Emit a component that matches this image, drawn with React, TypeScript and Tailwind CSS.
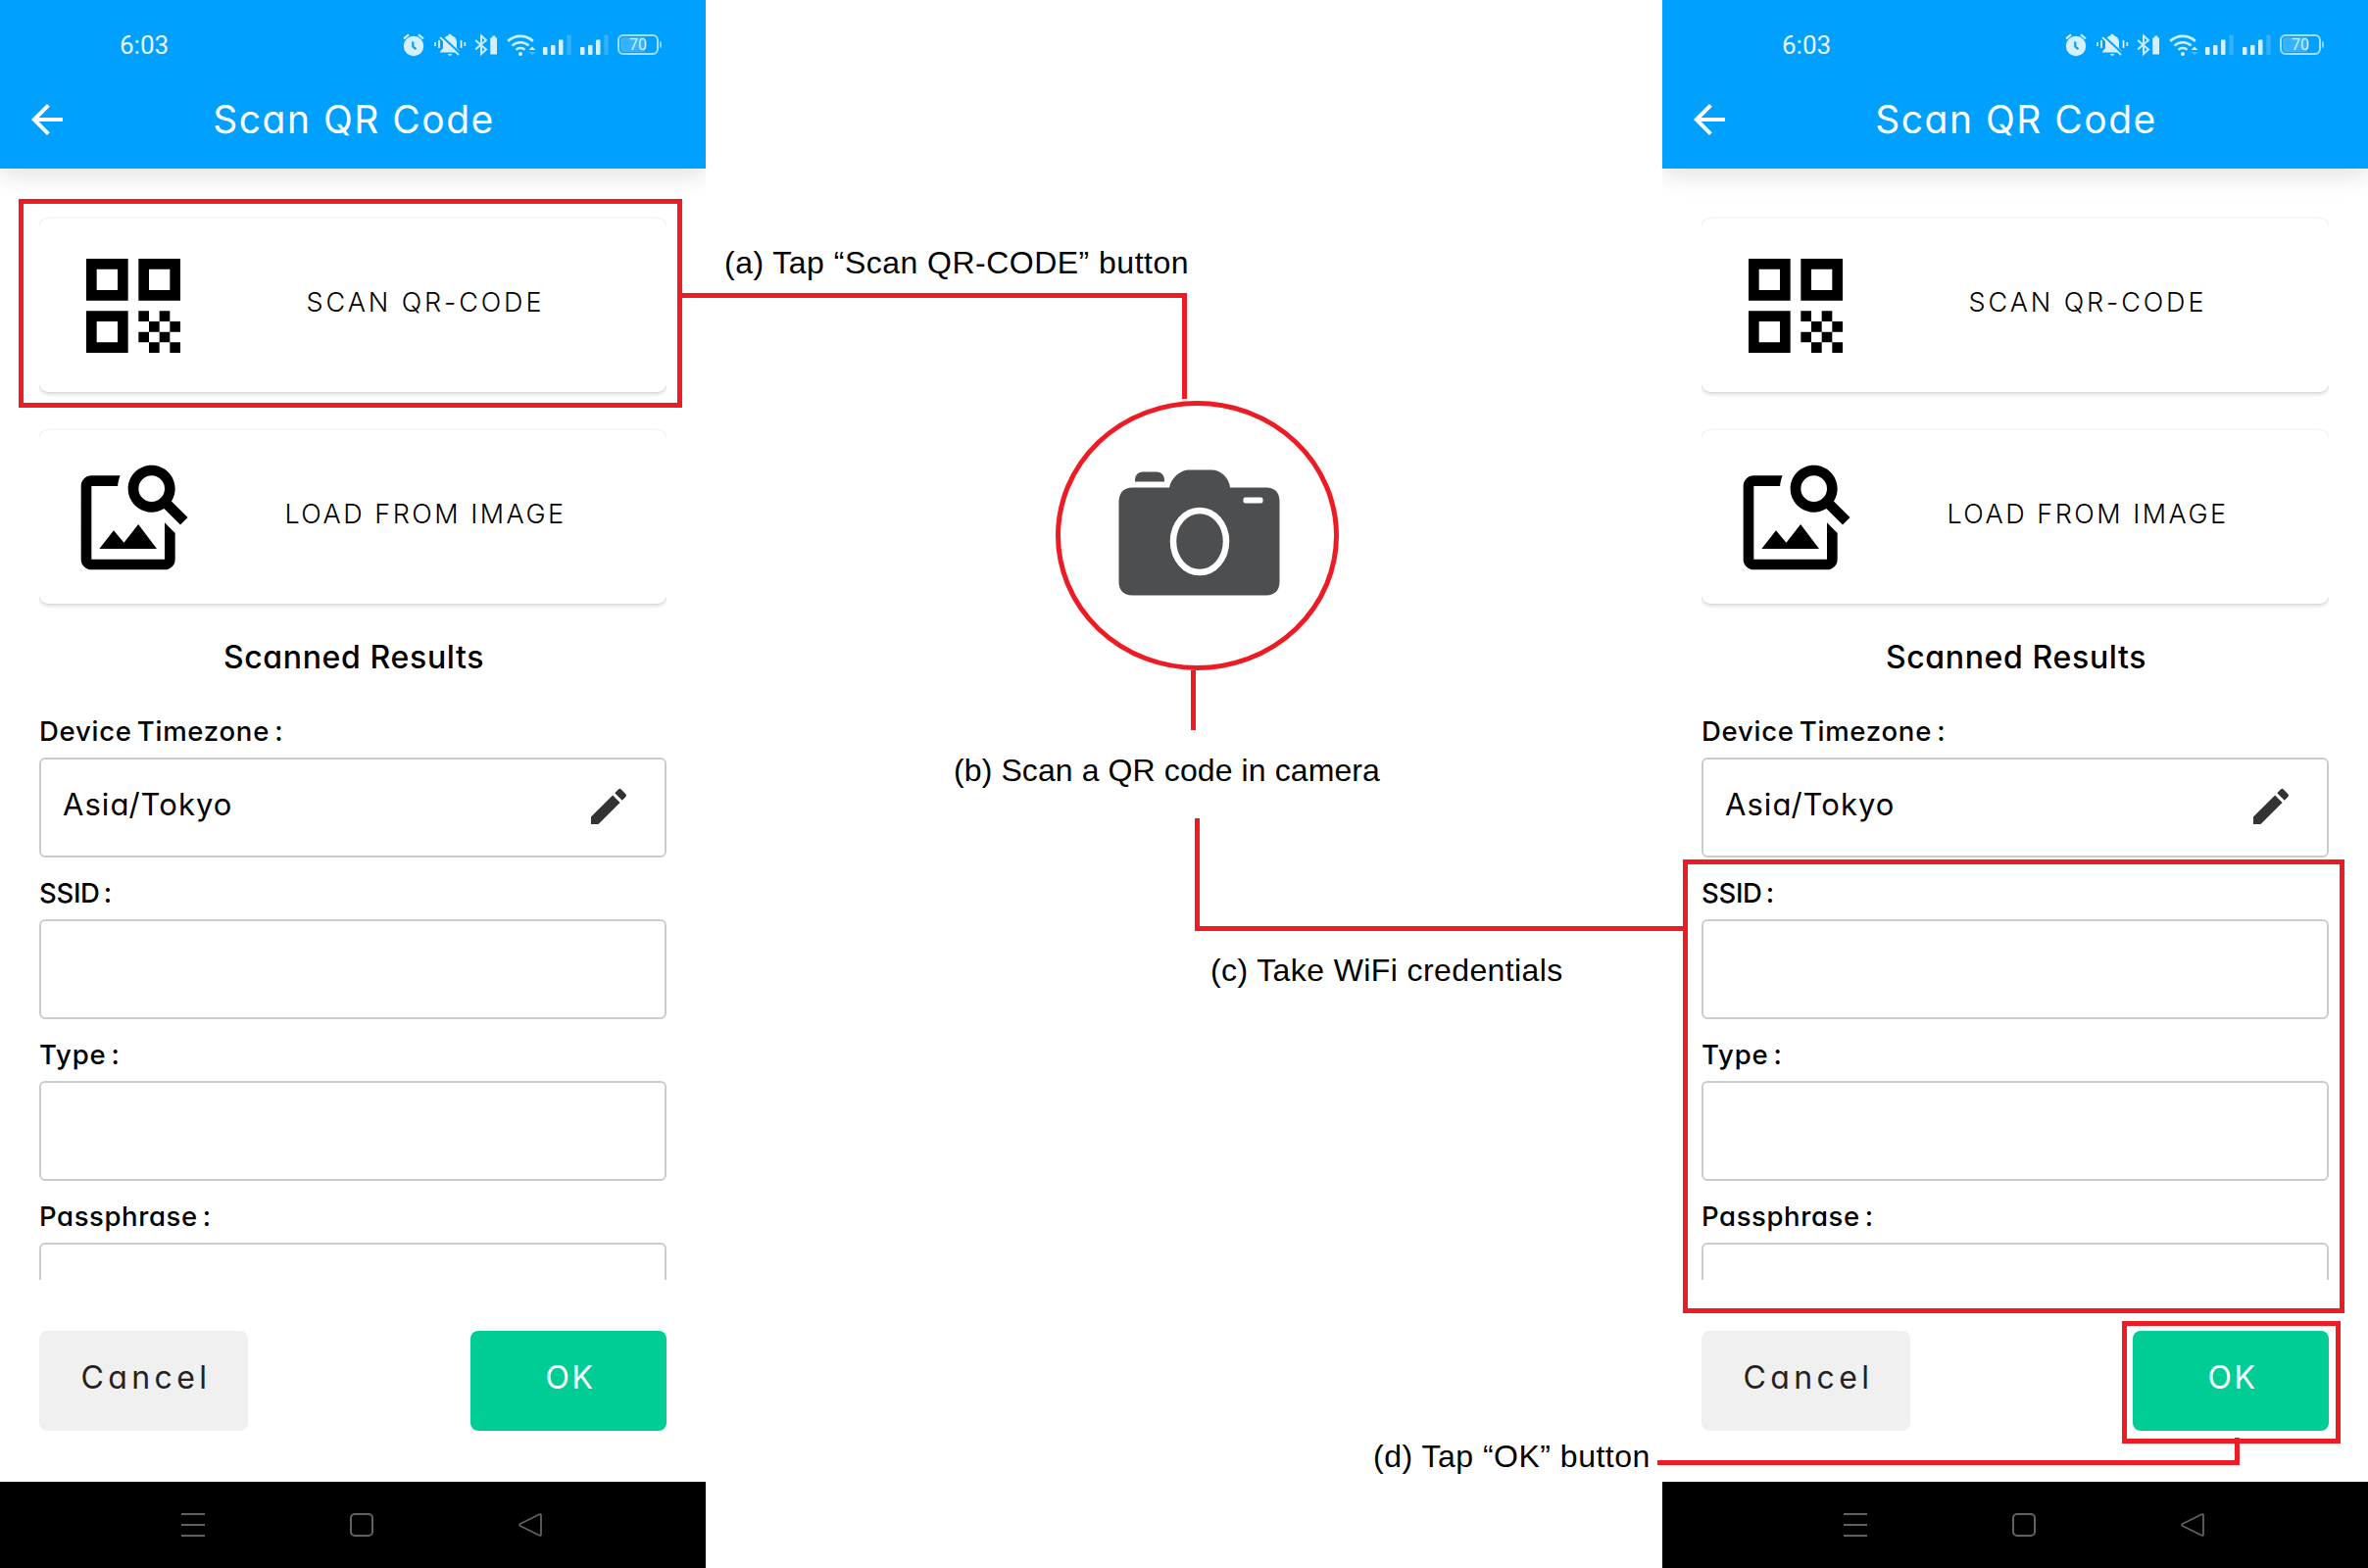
import React from "react";
import { MdArrowBack, MdEdit, MdImageSearch } from "react-icons/md";

function AlarmIcon() {
  return (
    <svg className="mr-[8px] h-[24px] w-[24px]" viewBox="0 0 24 24" fill="none">
      <circle cx="12" cy="13" r="10.2" fill="#d5f1ff" />
      <path d="M2 5.5 7 1.4M22 5.5l-5-4.1" stroke="#d5f1ff" strokeWidth="2.2" />
      <path d="M11.3 8.5v5l3.2 2.6" stroke="#00a0ff" strokeWidth="2.2" />
    </svg>
  );
}

function BellOffIcon() {
  return (
    <svg className="mr-[7px] h-[24px] w-[34px]" viewBox="0 0 34 24" fill="none">
      <path
        d="M17 .8c1 0 1.6.7 1.7 1.6 3.3.7 5.3 3.3 5.3 6.8V15l3 3.4v1H7v-1L10 15V9.200c0-3.500 2-6.100 5.300-6.800.1-.9.7-1.600 1.700-1.600ZM14.800 21h4.400c-.3 1.200-1.100 1.800-2.200 1.800s-1.900-.6-2.200-1.800Z"
        fill="#d5f1ff"
      />
      <path d="M8.500 3 27.500 20.500" stroke="#00a0ff" strokeWidth="2.200" />
      <path d="M7 4.200 26 22" stroke="#d5f1ff" strokeWidth="1.800" />
      <path d="M2 9v4M6 7v8M28.500 7v8M32.300 9v4" stroke="#d5f1ff" strokeWidth="1.800" />
    </svg>
  );
}

function BluetoothIcon() {
  return (
    <svg className="mr-[10px] h-[24px] w-[24px]" viewBox="0 0 24 24" fill="none">
      <path d="m2 7 11 9.500L8 21V2.500l5 4.500L2 16.500" stroke="#c4ecff" strokeWidth="2" />
      <path d="M17.300 4.500h2V2.500h3v2h1.700V21.500h-6.700z" fill="#d5f1ff" />
    </svg>
  );
}

function WifiIcon() {
  return (
    <svg className="mr-[7px] h-[24px] w-[30px]" viewBox="0 0 30 24" fill="none">
      <path d="M1.200 8a18.500 18.500 0 0 1 25.600 0" stroke="#c4f0ff" strokeWidth="2.600" />
      <path d="M5.500 12.600a12.300 12.300 0 0 1 17 0" stroke="#c4f0ff" strokeWidth="2.600" />
      <path d="M9.500 16.800a6.400 6.400 0 0 1 9 0" stroke="#c4f0ff" strokeWidth="2.600" />
      <circle cx="14" cy="21" r="2" fill="#d5f1ff" />
      <path d="m22.500 17 3.500-3.500 3.500 3.500z" fill="#c4f0ff" />
      <path d="m22.500 19 3.500 3.500 3.500-3.500z" fill="#45b9ff" />
    </svg>
  );
}

function SignalIcon() {
  return (
    <svg className="mr-[9px] h-[24px] w-[29px]" viewBox="0 0 29 24">
      <rect x="0" y="14" width="4.500" height="8" rx="1" fill="#d5f1ff" />
      <rect x="8" y="12" width="4.500" height="10" rx="1" fill="#d5f1ff" />
      <rect x="16" y="6.500" width="4.500" height="15.500" rx="1" fill="#d5f1ff" />
      <rect x="24.300" y="1.500" width="4.500" height="20.500" rx="1" fill="#33b0ff" />
    </svg>
  );
}

function Battery() {
  return (
    <div className="flex items-center">
      <div className="flex h-[21px] w-[42px] items-center rounded-[6px] border-2 border-[#9fdfff] p-px">
        <div className="flex h-full w-full items-center justify-center rounded-[4px] bg-[linear-gradient(90deg,#38b2ff_70%,#00a0ff_70%)] font-['Roboto'] text-[16px] leading-none text-[#d5f1ff]">
          70
        </div>
      </div>
      <div className="ml-[1px] h-[7px] w-[2px] rounded-r bg-[#8fd8ff]" />
    </div>
  );
}

function QrIcon() {
  return (
    <svg className="h-[128px] w-[128px]" viewBox="0 0 108 108" fill="#000">
      <path
        fillRule="evenodd"
        d="M13.500 13.500h36v36h-36zM22.500 22.500v18h18v-18zM58.500 13.500h36v36h-36zM67.500 22.500v18h18v-18zM13.500 58.500h36v36h-36zM22.500 67.500v18h18v-18z"
      />
      <path d="M58.500 58.500h9v9h-9zM76.500 58.500h9v9h-9zM67.500 67.500h9v9h-9zM85.500 67.500h9v9h-9zM58.500 76.500h9v9h-9zM76.500 76.500h9v9h-9zM67.500 85.500h9v9h-9zM85.500 85.500h9v9h-9z" />
    </svg>
  );
}

function ActionCard({ icon, children }: { icon: React.ReactNode; children: React.ReactNode }) {
  return (
    <div className="flex h-[177px] shrink-0 items-center rounded-[9px] bg-white pl-8 shadow-[0_2px_4px_rgba(0,0,0,0.16),0_0_2px_rgba(0,0,0,0.1)]">
      {icon}
      <div className="flex-1 pr-[12px] pb-[6px] text-center text-[27px] leading-[34px] font-[360]">{children}</div>
    </div>
  );
}

function Field({ label, children }: { label: React.ReactNode; children?: React.ReactNode }) {
  return (
    <div className="mb-[19px] shrink-0">
      <div className="mb-[10px] h-[34px] text-[27.5px] leading-[34px] font-medium whitespace-nowrap [word-spacing:-3px]">
        {label}
      </div>
      <div className="flex h-[102px] items-center justify-between rounded-[6px] border-2 border-[#cccccc] pr-[33px] pl-[22px]">
        {children}
      </div>
    </div>
  );
}

function Phone() {
  return (
    <div className="flex h-[1600px] w-[720px] shrink-0 flex-col overflow-hidden bg-white font-['Inter',sans-serif] text-black [font-feature-settings:'cv11']">
      <header className="relative z-10 flex h-[172px] shrink-0 flex-col bg-[#00a0ff] shadow-[0_6px_24px_rgba(0,0,0,0.13)]">
        <div className="flex h-[72px] items-center pt-[19px] pr-[45px] pl-[122px]">
          <span className="flex-1 font-['Roboto'] text-[26px] leading-[30px] text-[#e6f6ff]">6:03</span>
          <AlarmIcon />
          <BellOffIcon />
          <BluetoothIcon />
          <WifiIcon />
          <SignalIcon />
          <SignalIcon />
          <Battery />
        </div>
        <div className="flex h-[100px] items-center px-6">
          <MdArrowBack className="h-[48px] w-[48px] text-white" />
          <h1 className="flex-1 pr-[46px] text-center text-[39px] leading-[50px] tracking-[1.5px] text-white">
            Scan QR Code
          </h1>
        </div>
      </header>

      <main className="mx-10 flex h-[1134px] shrink-0 flex-col overflow-hidden pt-[51px]">
        <ActionCard icon={<QrIcon />}>
          <span className="tracking-[2.9px]">SCAN QR-CODE</span>
        </ActionCard>
        <div className="h-[39px] shrink-0" />
        <ActionCard icon={<MdImageSearch className="h-[128px] w-[128px]" />}>
          <span className="tracking-[2.5px]">LOAD FROM IMAGE</span>
        </ActionCard>
        <h2 className="mt-[35px] mb-[38px] shrink-0 pl-[2px] text-center text-[32px] leading-[40px] font-medium tracking-[0.65px]">
          Scanned Results
        </h2>
        <Field label={<span className="tracking-[0.75px]">Device Timezone :</span>}>
          <span className="pb-[5px] text-[31px] tracking-[1.05px]">Asia/Tokyo</span>
          <MdEdit className="mb-[3px] h-[48px] w-[48px] text-[#333333]" />
        </Field>
        <Field label={<span className="tracking-[-0.3px]">SSID :</span>} />
        <Field label={<span className="tracking-[0.8px]">Type :</span>} />
        <Field label={<span className="tracking-[0.6px]">Passphrase :</span>} />
      </main>

      <div className="flex h-[206px] shrink-0 items-start justify-between px-10 pt-[52px] text-[32px]">
        <button className="h-[102px] w-[213px] rounded-[8px] bg-[#f0f0f0] pb-[7px] pl-[5px] tracking-[4.4px] text-[#222222]">
          Cancel
        </button>
        <button className="h-[102px] w-[200px] rounded-[8px] bg-[#00cd95] pb-[7px] pl-[4px] tracking-[2.600px] text-white">
          OK
        </button>
      </div>

      <nav className="flex h-[88px] shrink-0 items-center gap-[148px] bg-black pl-[185px]">
        <div className="flex h-[24px] w-[24px] flex-col justify-between">
          <div className="h-[2px] bg-[#626262]" />
          <div className="h-[2px] bg-[#626262]" />
          <div className="h-[2px] bg-[#626262]" />
        </div>
        <div className="h-[24px] w-[24px] rounded-[5px] border-2 border-[#626262]" />
        <svg className="h-[24px] w-[24px]" viewBox="0 0 24 24" fill="none" stroke="#626262" strokeWidth="1.800">
          <path d="M21.400 1.300 1.700 11a1.100 1.100 0 0 0 0 2l19.700 9.700q1.600.6 1.600-1V2.300q0-1.600-1.600-1Z" />
        </svg>
      </nav>
    </div>
  );
}

function Camera() {
  return (
    <svg className="absolute top-[470px] left-[1130px] h-[150px] w-[190px]" viewBox="1130 470 190 150">
      <path
        fill="#4d4e50"
        d="M1155 497.500H1193C1195 487 1205 479.500 1213 479.500H1236C1245 479.500 1254 487 1255 497.500H1292Q1305.500 498 1305.500 512V594Q1305 607 1292 607.500H1155Q1142 607 1141.500 594V512Q1142 498 1155 497.500Z"
      />
      <path fill="#4d4e50" d="M1158 491.500V489Q1159 481.500 1166 481.500H1180Q1187 481.500 1188 489V491.500Z" />
      <rect x="1268.500" y="507.500" width="20" height="6" rx="2" fill="#fff" />
      <ellipse cx="1224" cy="552.500" rx="27" ry="31.500" fill="none" stroke="#fff" strokeWidth="6.500" />
    </svg>
  );
}

/* Red callout boxes and connector lines drawn over the two phones. */
function Connectors() {
  return (
    <svg
      className="absolute inset-0 z-20 h-[1600px] w-[2416px]"
      viewBox="0 0 2416 1600"
      fill="none"
      stroke="#ed1c24"
      strokeWidth="5"
    >
      <rect x="21.500" y="205.500" width="672" height="208" />
      <path d="M691 301.500H1208.500V407" />
      <ellipse cx="1221.500" cy="546.500" rx="142" ry="135" />
      <path d="M1217.500 684V745" />
      <path d="M1221.500 835V947.500H1718" />
      <rect x="1719.500" y="879.500" width="670" height="458" />
      <rect x="2167.500" y="1350.500" width="218" height="120" />
      <path d="M2282.500 1467V1492.500H1691" />
    </svg>
  );
}

export default function App() {
  return (
    <div className="relative flex h-[1600px] w-[2416px] overflow-hidden bg-white">
      <Phone />
      <section className="flex-1 font-['Liberation_Sans',sans-serif] text-[32px] leading-[40px] whitespace-nowrap text-black">
        <Camera />
        <p className="absolute top-[248px] left-[739px] tracking-[0.48px]">(a) Tap “Scan QR-CODE” button</p>
        <p className="absolute top-[766px] left-[973px] tracking-[0.1px]">(b) Scan a QR code in camera</p>
        <p className="absolute top-[970px] left-[1235px] tracking-[0.4px]">(c) Take WiFi credentials</p>
        <p className="absolute top-[1466px] left-[1401px] tracking-[0.5px]">(d) Tap “OK” button</p>
      </section>
      <Phone />
      <Connectors />
    </div>
  );
}
